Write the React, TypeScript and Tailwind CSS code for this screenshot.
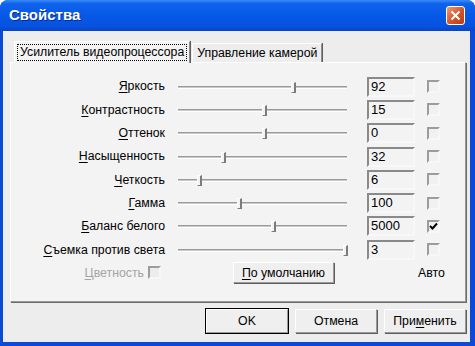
import React from "react";

type Row = { label: string; pos: number; val: string; checked?: boolean };

const rows: Row[] = [
	{ label: "Яркость", pos: 115, val: "92" },
	{ label: "Контрастность", pos: 86, val: "15" },
	{ label: "Оттенок", pos: 86, val: "0" },
	{ label: "Насыщенность", pos: 45, val: "32" },
	{ label: "Четкость", pos: 21, val: "6" },
	{ label: "Гамма", pos: 61, val: "100" },
	{ label: "Баланс белого", pos: 95, val: "5000", checked: true },
	{ label: "Съемка против света", pos: 167, val: "3" },
];

function Acc({ text, at = 0 }: { text: string; at?: number }) {
	return (
		<>
			{text.slice(0, at)}
			<span className="underline underline-offset-2">{text[at]}</span>
			{text.slice(at + 1)}
		</>
	);
}

function Check({ checked, disabled }: { checked?: boolean; disabled?: boolean }) {
	return (
		<div
			className={`w-[13px] h-[13px] border-2 border-t-[#9C9C9C] border-l-[#9C9C9C] border-r-[#F7F7F7] border-b-[#F7F7F7] flex items-center justify-center ${
				disabled ? "bg-[#ECECEC]" : "bg-[#F1F1F1]"
			}`}
		>
			{checked && (
				<svg width="9" height="9" viewBox="0 0 9 9">
					<path d="M1 4 L3.5 6.5 L8 1.5" stroke="#000" strokeWidth="2" fill="none" />
				</svg>
			)}
		</div>
	);
}

function Slider({ pos }: { pos: number }) {
	return (
		<div className="relative w-[169px] h-[20px] ml-[13px]">
			<div className="absolute left-0 right-0 top-[9px] h-[3px] border-t border-t-[#9A9A9A] border-b border-b-white bg-[#C9C9C9]" />
			<div
				className="absolute top-[5px] w-[5px] h-[11px] bg-[#F2F2F2] border-l border-t border-l-white border-t-white border-r-2 border-b border-r-[#7C7C7C] border-b-[#7C7C7C]"
				style={{ left: pos - 2 }}
			/>
		</div>
	);
}

function Btn({ children, def, className = "" }: { children: React.ReactNode; def?: boolean; className?: string }) {
	return (
		<div
			className={`flex items-center justify-center bg-[#EFEFEF] border border-t-white border-l-white border-r-[#9A9A9A] border-b-[#9A9A9A] shadow-[1px_1px_0_#5E5E5E] ${
				def ? "outline outline-1 outline-black" : ""
			} ${className}`}
		>
			{children}
		</div>
	);
}

export default function App() {
	return (
		<div className="w-[475px] h-[346px] flex flex-col rounded-t-[8px] overflow-hidden bg-[#0B4AD6] [font-family:'Liberation_Sans',Arial,sans-serif] text-[12.3px] text-black">
			<div className="h-[31px] flex items-center justify-between pl-[9px] pr-[10px] bg-[linear-gradient(#3B8CF7_0%,#0E62EC_12%,#0559E6_50%,#0752DE_85%,#0A44C7_100%)]">
				<span className="text-white font-bold text-[15px] [text-shadow:1px_1px_0_#0A2A90]">Свойства</span>
				<div className="w-[19px] h-[19px] rounded-[3px] border border-white bg-[linear-gradient(135deg,#EE9A76,#D5532A_55%,#B83A15)] flex items-center justify-center">
					<svg width="11" height="11" viewBox="0 0 11 11">
						<path d="M1.5 1.5 L9.5 9.5 M9.5 1.5 L1.5 9.5" stroke="#fff" strokeWidth="2" />
					</svg>
				</div>
			</div>
			<div className="flex-1 ml-[3px] mr-[5px] mb-[4px] bg-[#EDEDED] flex flex-col pl-[7px] pt-[10px] pb-[9px]">
				<div className="flex items-end h-[21px] pl-[4px] relative z-10">
					<div className="h-[22px] -mb-px px-[3px] flex items-center bg-[#F3F3F3] border-t border-l border-t-white border-l-white border-r border-r-[#8E8E8E] shadow-[1px_0_0_#5E5E5E]">
						<span className="outline outline-1 outline-dotted outline-black px-[2px] leading-[15px]">Усилитель видеопроцессора</span>
					</div>
					<div className="h-[19px] ml-[2px] px-[4px] flex items-center bg-[#EDEDED] border-t border-l border-t-white border-l-white border-r border-r-[#8E8E8E] shadow-[1px_0_0_#5E5E5E]">
						Управление камерой
					</div>
				</div>
				<div className="flex-1 w-[456px] bg-[#F3F3F3] border border-t-white border-l-white border-r-[#9A9A9A] border-b-[#9A9A9A] shadow-[1px_1px_0_#6A6A6A] pt-[12px] flex flex-col">
					{rows.map((r) => (
						<div key={r.label} className="flex items-center h-[23.3px]">
							<div className="w-[154px] text-right whitespace-nowrap">
								<Acc text={r.label} />
							</div>
							<Slider pos={r.pos} />
							<div className="ml-[20px] w-[48px] h-[20px] border-2 border-t-[#8A8A8A] border-l-[#8A8A8A] border-r-[#F8F8F8] border-b-[#F8F8F8] bg-[#F3F3F3] pl-[2px] leading-[16px] text-[13px]">
								{r.val}
							</div>
							<div className="ml-[12px]">
								<Check checked={r.checked} />
							</div>
						</div>
					))}
					<div className="flex items-center h-[23px]">
						<div className="w-[154px] flex items-center justify-end pr-[4px] gap-[4px] text-[#A4A4A4]">
							<span>
								<Acc text="Цветность" />
							</span>
							<Check disabled />
						</div>
						<Btn className="ml-[68px] w-[101px] h-[21px]">
							<Acc text="По умолчанию" />
						</Btn>
						<span className="ml-[84px]">Авто</span>
					</div>
				</div>
				<div className="flex justify-end gap-[7px] mt-[7px] pr-[4px]">
					<Btn def className="w-[82px] h-[24px]">
						OK
					</Btn>
					<Btn className="w-[82px] h-[24px]">Отмена</Btn>
					<Btn className="w-[82px] h-[24px]">
						<Acc text="Применить" at={3} />
					</Btn>
				</div>
			</div>
		</div>
	);
}
